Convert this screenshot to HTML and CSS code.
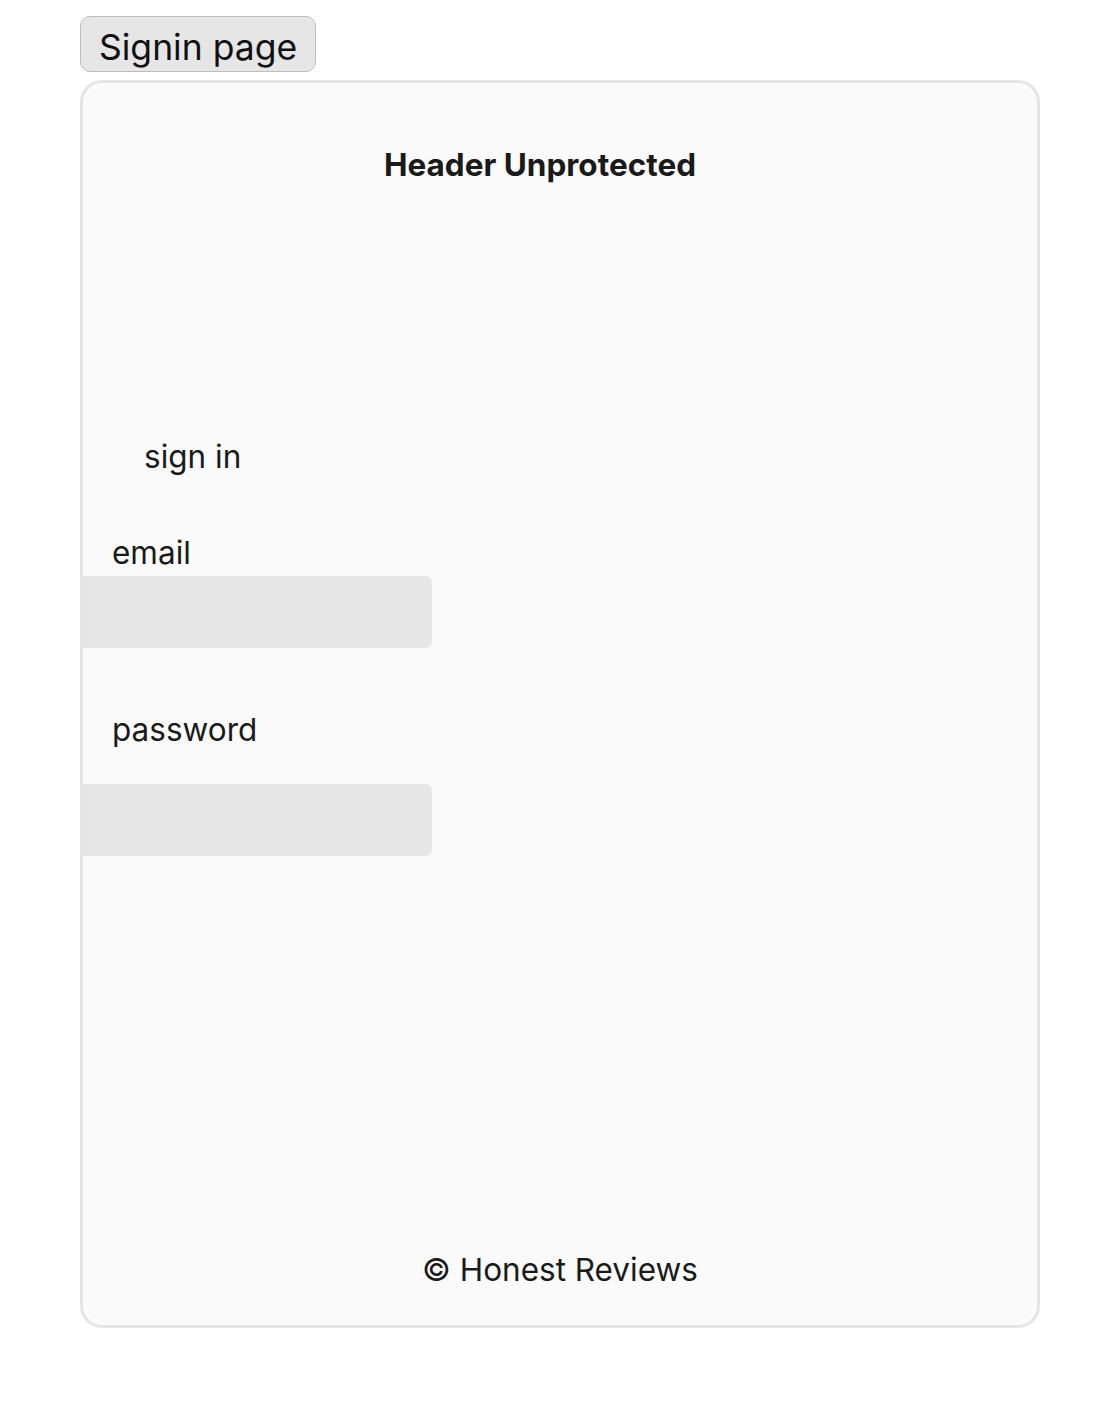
FILE: index.html
```html
<!DOCTYPE html>
<html>
<head>
<meta charset="utf-8">
<link rel="stylesheet" href="styles.css">
</head>
<body>
<div class="page">
  <button class="nav-btn">Signin page</button>
  <div class="card">
    <header class="card-header">Header Unprotected</header>
    <main class="signin">
      <div class="signin-title">sign in</div>
      <label class="field-label">email</label>
      <div class="field-input"></div>
      <label class="field-label pw">password</label>
      <div class="field-input"></div>
    </main>
    <footer class="card-footer">© Honest Reviews</footer>
  </div>
</div>
</body>
</html>
```
FILE: styles.css
```css
html, body {
  margin: 0;
  padding: 0;
  background: #ffffff;
  font-family: Inter, "Noto Sans", sans-serif;
  color: #1a1a1a;
}
.page {
  padding: 16px 80px 0 80px;
  display: flex;
  flex-direction: column;
  align-items: flex-start;
  gap: 8px;
}
.nav-btn {
  font-family: Inter, sans-serif;
  font-size: 35.5px;
  line-height: 40px;
  height: 56px;
  padding: 8px 18px 0 18px;
  background: #e6e6e6;
  border: 1.5px solid #bdbdbd;
  border-radius: 10px;
  color: #111;
}
.card {
  box-sizing: border-box;
  width: 960px;
  height: 1248px;
  border: 3px solid #e5e5e5;
  border-radius: 22px;
  background: #fafafa;
  display: flex;
  flex-direction: column;
  overflow: hidden;
}
.card-header {
  font-weight: 700;
  font-size: 31.5px;
  line-height: 36px;
  padding-top: 64px;
  padding-right: 40px;
  text-align: center;
}
.signin {
  display: flex;
  flex-direction: column;
  align-items: flex-start;
  padding-top: 256px;
}
.signin-title {
  font-size: 31.5px;
  line-height: 36px;
  padding-left: 61px;
  margin-bottom: 60px;
}
.field-label {
  font-size: 31.5px;
  line-height: 36px;
  padding-left: 29px;
  margin-bottom: 5px;
}
.field-label.pw {
  margin-top: 64px;
  margin-bottom: 36px;
}
.field-input {
  width: 349px;
  height: 72px;
  background: #e6e6e6;
  border-radius: 0 6px 6px 0;
}
.card-footer {
  margin-top: auto;
  padding-bottom: 37px;
  text-align: center;
  font-size: 31.5px;
  line-height: 36px;
}
```
